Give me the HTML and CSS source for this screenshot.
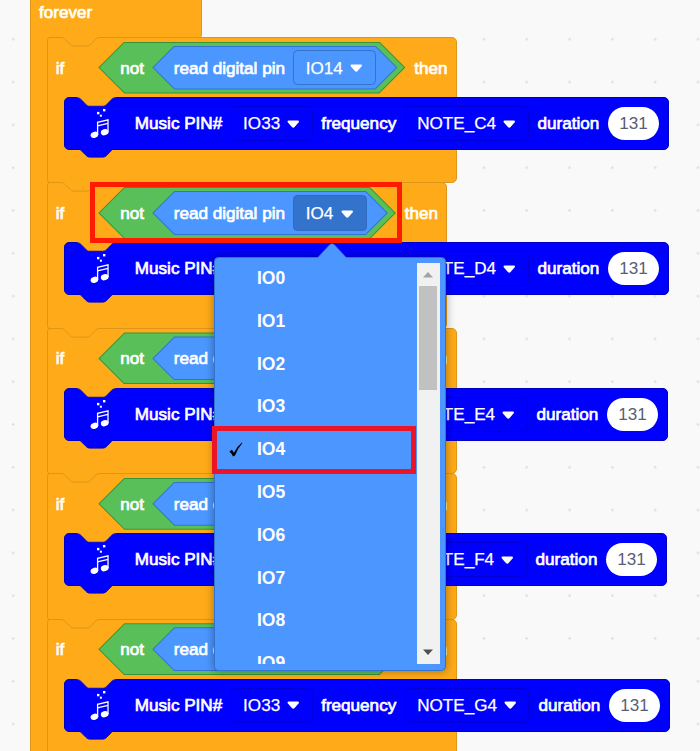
FILE: index.html
```
<!DOCTYPE html>
<html lang="en">
<head>
<meta charset="utf-8">
<title>Block workspace</title>
<link rel="stylesheet" href="styles.css">
</head>
<body>
<svg class="defs" aria-hidden="true">
  <symbol id="notch" viewBox="0 0 40 11">
    <path class="fill" d="M0 0V.5C2.1 .5 3.2 1.600 4.300 2.600L8.600 6.900C9.700 8 10.700 9.100 12.800 9.100H25.700C27.800 9.100 28.900 8 30 6.900L34.200 2.600C35.300 1.600 36.400 .5 38.500 .5V0Z"/>
    <path class="line" d="M0 .5C2.1 .5 3.2 1.600 4.300 2.600L8.600 6.900C9.700 8 10.700 9.100 12.800 9.100H25.700C27.800 9.100 28.900 8 30 6.900L34.200 2.600C35.300 1.600 36.400 .5 38.500 .5"/>
  </symbol>
  <symbol id="arrow" viewBox="0 0 13 9">
    <path d="M1.800 .6H11.200Q13.200 1 12 2.700L7.900 7.200Q6.500 8.700 5.100 7.200L1 2.700Q-.2 1 1.800 .6Z" fill="#fff"/>
  </symbol>
  <symbol id="music" viewBox="0 0 20 30">
    <g fill="#fff">
      <ellipse cx="4.400" cy="25.800" rx="3.900" ry="3" transform="rotate(-18 4.400 25.800)"/>
      <ellipse cx="14.700" cy="23.200" rx="3.900" ry="3" transform="rotate(-18 14.700 23.200)"/>
      <rect x="7" y="2.900" width="2.400" height="2.400"/>
      <rect x="13" y="0" width="2.400" height="2.400"/>
      <rect x="9.900" y="5.700" width="2" height="2"/>
    </g>
    <path d="M7.600 25.500V13.300L18 10.800V23M7.600 16.900L18 14.400" fill="none" stroke="#fff" stroke-width="1.300"/>
  </symbol>
</svg>
<main class="workspace">
  <section class="forever">
    <header class="forever-head"><span class="label">forever</span></header>
    <div class="stack">

      <article class="if-block">
        <svg class="notch"><use href="#notch"/></svg>
        <div class="condition">
          <span class="label if">if</span>
          <div class="not"><span class="label">not</span>
            <div class="read"><span class="label">read digital pin</span>
              <div class="pin">IO14<svg class="arrow"><use href="#arrow"/></svg></div></div></div>
          <span class="label">then</span>
        </div>
        <div class="music">
          <svg class="notch top"><use href="#notch"/></svg><svg class="notch bottom"><use href="#notch"/></svg>
          <svg class="icon"><use href="#music"/></svg>
          <span class="label name">Music PIN#</span>
          <div class="field out">IO33<svg class="arrow"><use href="#arrow"/></svg></div>
          <span class="label freq">frequency</span>
          <div class="field">NOTE_C4<svg class="arrow"><use href="#arrow"/></svg></div>
          <span class="label dur">duration</span><div class="number">131</div>
        </div>
      </article>

      <article class="if-block narrow">
        <svg class="notch"><use href="#notch"/></svg>
        <div class="condition">
          <span class="label if">if</span>
          <div class="not"><span class="label">not</span>
            <div class="read"><span class="label">read digital pin</span>
              <div class="pin open">IO4<svg class="arrow"><use href="#arrow"/></svg></div></div></div>
          <span class="label">then</span>
        </div>
        <div class="music">
          <svg class="notch top"><use href="#notch"/></svg><svg class="notch bottom"><use href="#notch"/></svg>
          <svg class="icon"><use href="#music"/></svg>
          <span class="label name">Music PIN#</span>
          <div class="field out">IO33<svg class="arrow"><use href="#arrow"/></svg></div>
          <span class="label freq">frequency</span>
          <div class="field">NOTE_D4<svg class="arrow"><use href="#arrow"/></svg></div>
          <span class="label dur">duration</span><div class="number">131</div>
        </div>
      </article>

      <article class="if-block">
        <svg class="notch"><use href="#notch"/></svg>
        <div class="condition">
          <span class="label if">if</span>
          <div class="not"><span class="label">not</span>
            <div class="read"><span class="label">read digital pin</span>
              <div class="pin">IO15<svg class="arrow"><use href="#arrow"/></svg></div></div></div>
          <span class="label">then</span>
        </div>
        <div class="music">
          <svg class="notch top"><use href="#notch"/></svg><svg class="notch bottom"><use href="#notch"/></svg>
          <svg class="icon"><use href="#music"/></svg>
          <span class="label name">Music PIN#</span>
          <div class="field out">IO33<svg class="arrow"><use href="#arrow"/></svg></div>
          <span class="label freq">frequency</span>
          <div class="field">NOTE_E4<svg class="arrow"><use href="#arrow"/></svg></div>
          <span class="label dur">duration</span><div class="number">131</div>
        </div>
      </article>

      <article class="if-block">
        <svg class="notch"><use href="#notch"/></svg>
        <div class="condition">
          <span class="label if">if</span>
          <div class="not"><span class="label">not</span>
            <div class="read"><span class="label">read digital pin</span>
              <div class="pin">IO16<svg class="arrow"><use href="#arrow"/></svg></div></div></div>
          <span class="label">then</span>
        </div>
        <div class="music">
          <svg class="notch top"><use href="#notch"/></svg><svg class="notch bottom"><use href="#notch"/></svg>
          <svg class="icon"><use href="#music"/></svg>
          <span class="label name">Music PIN#</span>
          <div class="field out">IO33<svg class="arrow"><use href="#arrow"/></svg></div>
          <span class="label freq">frequency</span>
          <div class="field">NOTE_F4<svg class="arrow"><use href="#arrow"/></svg></div>
          <span class="label dur">duration</span><div class="number">131</div>
        </div>
      </article>

      <article class="if-block">
        <svg class="notch"><use href="#notch"/></svg>
        <div class="condition">
          <span class="label if">if</span>
          <div class="not"><span class="label">not</span>
            <div class="read"><span class="label">read digital pin</span>
              <div class="pin">IO17<svg class="arrow"><use href="#arrow"/></svg></div></div></div>
          <span class="label">then</span>
        </div>
        <div class="music">
          <svg class="notch top"><use href="#notch"/></svg><svg class="notch bottom"><use href="#notch"/></svg>
          <svg class="icon"><use href="#music"/></svg>
          <span class="label name">Music PIN#</span>
          <div class="field out">IO33<svg class="arrow"><use href="#arrow"/></svg></div>
          <span class="label freq">frequency</span>
          <div class="field">NOTE_G4<svg class="arrow"><use href="#arrow"/></svg></div>
          <span class="label dur">duration</span><div class="number">131</div>
        </div>
      </article>
    </div>
  </section>

  <div class="mark mark-condition"></div>

  <div class="menu">
    <svg class="menu-tip" viewBox="0 0 30 16"><path d="M0 15.500L12.500 2Q15 -.5 17.500 2L30 15.500V16H0Z" fill="#4c97ff"/><path d="M.5 15L12.500 2Q15 -.5 17.500 2L29.500 15" fill="none" stroke="#3b80e0" stroke-width=".8"/></svg>
    <ul class="options">
      <li>IO0</li><li>IO1</li><li>IO2</li><li>IO3</li>
      <li><svg class="check" viewBox="0 0 13 14"><path d="M.3 8.900L2.700 7.300L4.600 10.100Q7.500 4 12 .4L12.500 1Q8.500 5.500 5.600 12.600L3.700 13.500Q2.500 10.800 .3 8.900Z"/></svg>IO4</li>
      <li>IO5</li><li>IO6</li><li>IO7</li><li>IO8</li><li>IO9</li>
    </ul>
    <div class="scrollbar">
      <svg viewBox="0 0 10 6"><path d="M0 5.500L5 0L10 5.500Z" fill="#a3a3a3"/></svg>
      <div class="thumb"></div>
      <svg viewBox="0 0 10 6"><path d="M0 .5L5 6L10 .5Z" fill="#505050"/></svg>
    </div>
  </div>
  <div class="mark mark-option"></div>
</main>
</body>
</html>
```
FILE: styles.css
```
* { box-sizing: border-box; }
body { margin: 0; }
.defs { position: absolute; width: 0; height: 0; }

.workspace {
  position: relative;
  width: 700px;
  height: 751px;
  overflow: hidden;
  padding-left: 29.5px;
  background-color: #f9f9f9;
  background-image: radial-gradient(circle at center, #dcdcdc 0.8px, transparent 1.6px);
  background-size: 42.8px 42.8px;
  background-position: -8.2px 17.9px;
  font: 17.1px/20px "Liberation Sans", Arial, sans-serif;
  color: #fff;
  white-space: nowrap;
}
.label { -webkit-text-stroke: 0.7px #fff; }

/* Outer loop */
.forever { width: 172px; }
.forever-head {
  height: 37.5px;
  padding: 3px 0 0 8.500px;
  background: #ffab19;
  border: 1px solid #dd951a;
  border-width: 0 1px 0 1px;
  border-bottom-right-radius: 4px;
}
.stack {
  height: 720px;
  margin-top: -0.500px;
  padding-left: 16.800px;
  border-left: 1px solid #dd951a;
  background: linear-gradient(#ffab19, #ffab19) 0 0 / 18px 100% no-repeat;
}

/* Conditional blocks */
.if-block {
  position: relative;
  width: 410px;
  height: 146.450px;
  margin-bottom: -1px;
  background: #ffab19;
  border: 1px solid #dd951a;
  border-radius: 3px 5px 5px 3px;
}
.if-block.narrow { width: 400px; }
.notch { position: absolute; left: 12.300px; top: -1px; width: 40px; height: 11px; fill: #ffab19; stroke: #dd951a; }
#notch .fill { stroke: none; }
#notch .line { fill: none; }
.condition { display: flex; align-items: center; height: 59px; padding-left: 7.500px; }
.condition > .label { position: relative; top: 1px; }
.condition .if { width: 42.500px; }

.not, .read { position: relative; display: flex; align-items: center; isolation: isolate; }
.not { height: 52px; padding: 0 8px 0 22px; margin-right: 9px; }
.not > .label { width: 32px; padding-top: 2px; }
.read { height: 44px; padding: 0 21px 0 21.500px; }
.read > .label { width: 119px; padding-top: 2px; }
.not::before, .not::after, .read::before, .read::after {
  content: "";
  position: absolute;
  inset: 0;
  z-index: -1;
  clip-path: polygon(var(--p) 0, calc(100% - var(--p)) 0, 100% 50%, calc(100% - var(--p)) 100%, var(--p) 100%, 0 50%);
}
.not { --p: 26px; }
.read { --p: 22px; }
.not::before { background: #389438; }
.read::before { background: #3373cc; }
.not::after, .read::after { inset: 1px 1.400px; }
.not::after { --p: 25px; background: #59c059; }
.read::after { --p: 21px; background: #4c97ff; }
.pin, .field {
  display: flex;
  align-items: center;
  gap: 7.500px;
  height: 35.500px;
  padding: 2px 12.500px 0 12px;
  border: 1px solid #3373cc;
  border-radius: 4.500px;
  -webkit-text-stroke: 0.25px #fff;
}
.pin.open { background: #3373cc; border-color: #2d6ac0; }
.arrow { width: 12.500px; height: 8.700px; flex: none; }

/* Music blocks */
.music {
  position: relative;
  display: flex;
  align-items: center;
  width: max-content;
  height: 53px;
  margin-left: 15.500px;
  padding-right: 9px;
  background: #00f;
  border: 1px solid #0000c4;
  border-radius: 5px;
}
.notch.top { stroke: #3a2790; stroke-width: 0.7px; }
.notch.bottom { top: auto; bottom: -10px; fill: #00f; stroke: #0000c4; }
.icon { width: 20px; height: 30px; margin: 1px 25px 0; }
.music > .label { padding-top: 1px; }
.name { width: 95.800px; }
.field { height: 35px; padding: 1px 12px 0 11.500px; gap: 7px; border-color: #0000d8; }
.freq { margin: 0 8px 0 8.500px; width: 75.500px; }
.dur { margin-left: 9px; width: 70.500px; }
.number {
  width: 51px;
  height: 33px;
  border-radius: 17px;
  background: #fff;
  color: #575e75;
  line-height: 34px;
  text-align: center;
}

/* Pin menu */
.menu {
  position: absolute;
  left: 213.500px;
  top: 257px;
  width: 232px;
  height: 413.500px;
  display: flex;
  justify-content: space-between;
  padding: 5px 5px 5px 0;
  background: #4c97ff;
  border: 1px solid #3373cc;
  border-radius: 4.500px;
  box-shadow: 0 0 8px 1px rgba(0, 0, 0, 0.3);
}
.menu-tip { position: absolute; left: 102px; top: -15px; width: 30px; height: 16px; }
.options {
  list-style: none;
  margin: 0;
  padding: 0;
  width: 200px;
  height: 401px;
  overflow: hidden;
  font-weight: bold;
  font-size: 17.500px;
}
.options li { position: relative; height: 30.800px; margin-bottom: 12px; padding-left: 42.500px; line-height: 30.500px; }
.check { position: absolute; left: 14px; top: 8px; width: 14px; height: 15px; }
.scrollbar {
  display: flex;
  flex-direction: column;
  align-items: center;
  width: 23px;
  height: 401px;
  padding: 9px 0;
  background: #f1f1f1;
}
.scrollbar svg { width: 10px; height: 6px; }
.thumb { width: 18px; height: 104px; margin: 8px 0 auto; background: #c1c1c1; }

/* Highlight frames */
.mark { position: absolute; }
.mark-condition { left: 89.500px; top: 182px; width: 312.500px; height: 61px; border: 5px solid #ff1a00; }
.mark-option { left: 211.500px; top: 426px; width: 204px; height: 48px; border: 5px solid #ea1527; }
```
